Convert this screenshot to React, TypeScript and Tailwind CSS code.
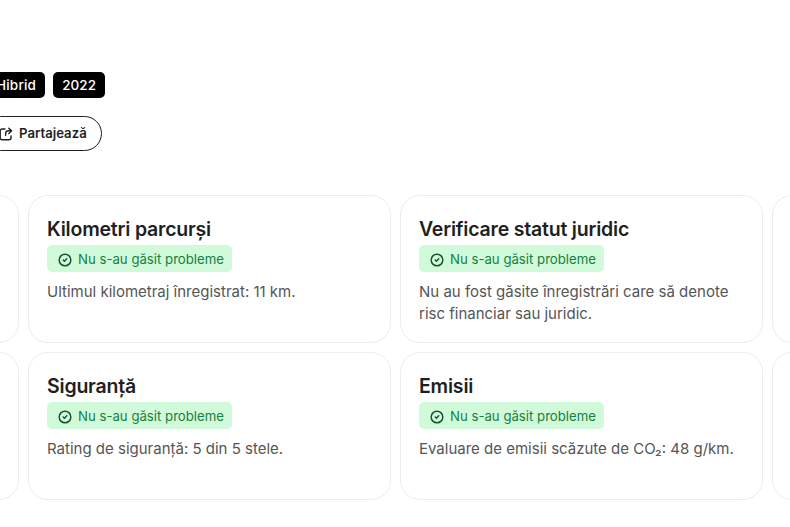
import React from "react";
import { CircleCheck } from "lucide-react";

const rows = [
  [
    null,
    { title: "Kilometri parcurși", text: "Ultimul kilometraj înregistrat: 11 km." },
    { title: "Verificare statut juridic", text: "Nu au fost găsite înregistrări care să denote risc financiar sau juridic." },
    null,
  ],
  [
    null,
    { title: "Siguranță", text: "Rating de siguranță: 5 din 5 stele." },
    { title: "Emisii", text: "Evaluare de emisii scăzute de CO₂: 48 g/km." },
    null,
  ],
];

const ShareIcon = () => (
  <svg width="14" height="14" viewBox="0 0 14 14" fill="none" stroke="currentColor" strokeWidth="1.4" strokeLinecap="round" strokeLinejoin="round">
    <path d="M6 2H3.2A2 2 0 0 0 1.2 4v6.8a2 2 0 0 0 2 2H10a2 2 0 0 0 2-2V9" />
    <path d="M9.8 1.2l2.8 2.6-2.8 2.6" />
    <path d="M12.4 3.8H9.6A3 3 0 0 0 6.6 6.8v1.4" />
  </svg>
);

export default function App() {
  return (
    <div className="h-[527px] w-[790px] overflow-hidden bg-white font-['Inter',sans-serif] text-[#1f1f1f]">
      <div className="-ml-[344px] pt-[72px]">
        {/* Tags */}
        <div className="ml-[331px] flex gap-[8px]">
          <span className="flex h-[26px] items-center rounded-[5px] bg-black px-[9px] text-[13.5px] font-medium tracking-[0.2px] text-white">Hibrid</span>
          <span className="flex h-[26px] items-center rounded-[5px] bg-black px-[9px] text-[13.5px] font-medium tracking-[0.1px] text-white">2022</span>
        </div>

        {/* Share */}
        <button className="mt-[18px] ml-[327px] flex h-[35px] items-center gap-[6px] rounded-full border border-[#1f1f1f] pr-[14px] pl-[15px] text-[13.2px] font-semibold">
          <ShareIcon />
          Partajează
        </button>

        {/* Report cards */}
        <div className="mt-[44px] grid grid-cols-[repeat(4,363px)] grid-rows-[148px_148px] gap-[9px]">
          {rows.flat().map((card, i) => (
            <div key={i} className="rounded-[20px] border border-[#ececec] bg-white px-[18px] pt-[20px]">
              {card && (
                <>
                  <h3 className="text-[19.5px] leading-[26px] font-semibold tracking-[-0.2px]">{card.title}</h3>
                  <div className="mt-[3px] flex h-[27px] w-[185px] items-center gap-[6px] rounded-[5px] bg-[#d1fadb] pt-[2px] pl-[11px] text-[13.2px] text-[#15803d]">
                    <CircleCheck size={14} strokeWidth={2.5} className="text-[#14532d]" />
                    Nu s-au găsit probleme
                  </div>
                  <p className="mt-[9px] text-[15px] leading-[22px] text-[#555555]">{card.text}</p>
                </>
              )}
            </div>
          ))}
        </div>
      </div>
    </div>
  );
}
